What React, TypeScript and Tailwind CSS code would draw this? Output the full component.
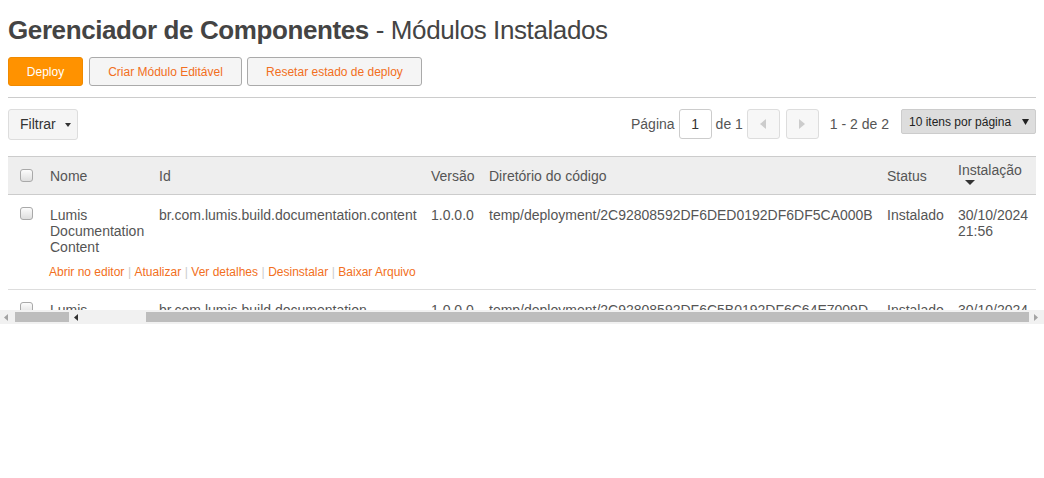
const rows = [
  {
    nome: ['Lumis', 'Documentation', 'Content'],
    id: 'br.com.lumis.build.documentation.content',
    versao: '1.0.0.0',
    dir: 'temp/deployment/2C92808592DF6DED0192DF6DF5CA000B',
    status: 'Instalado',
    data: ['30/10/2024', '21:56'],
  },
  {
    nome: ['Lumis', 'Documentation', 'Site'],
    id: 'br.com.lumis.build.documentation',
    versao: '1.0.0.0',
    dir: 'temp/deployment/2C92808592DF6C5B0192DF6C64E7009D',
    status: 'Instalado',
    data: ['30/10/2024', '21:55'],
  },
]

const acoes = ['Abrir no editor', 'Atualizar', 'Ver detalhes', 'Desinstalar', 'Baixar Arquivo']

function Checkbox() {
  return (
    <span className="block w-[13px] h-[13px] rounded-[3px] border border-[#a9a9a9] bg-gradient-to-b from-[#fcfcfc] to-[#dedede]" />
  )
}

export default function App() {
  return (
    <div className="w-[1044px] h-[478px] bg-white font-['Liberation_Sans',Arial,sans-serif] text-[#555]">
      <div className="px-2 pt-[13px]">
        {/* Title */}
        <h1 className="text-[26px] leading-[34px] text-[#444] tracking-[-0.4px]">
          <span className="font-bold">Gerenciador de Componentes</span> - Módulos Instalados
        </h1>

        {/* Actions */}
        <div className="mt-[10px] flex gap-[5px] pb-[11px] border-b border-[#ccc]">
          <button className="h-[29px] w-[75px] rounded-[3px] border border-[#f08a00] bg-[#ff9200] text-white text-[12px]">
            Deploy
          </button>
          <button className="h-[29px] ml-[1px] w-[153px] rounded-[3px] border border-[#aaa] bg-[#f5f5f5] text-[#f26f21] text-[12px]">
            Criar Módulo Editável
          </button>
          <button className="h-[29px] w-[175px] rounded-[3px] border border-[#aaa] bg-[#f5f5f5] text-[#f26f21] text-[12px]">
            Resetar estado de deploy
          </button>
        </div>

        {/* Toolbar */}
        <div className="mt-[11px] flex items-start justify-between">
          <button className="h-[31px] w-[70px] flex items-center pl-[11px] gap-[9px] rounded-[3px] border border-[#ddd] bg-[#f5f5f5] text-[14px] text-[#333]">
            Filtrar
            <svg width="6" height="4" viewBox="0 0 6 4"><path d="M0 0 L6 0 L3 4 Z" fill="#333" /></svg>
          </button>
          <div className="flex items-center text-[14px] text-[#555]">
            <span className="mr-[4px]">Página</span>
            <span className="w-[33px] h-[30px] flex items-center justify-center rounded-[3px] border border-[#ccc] text-[#333]">1</span>
            <span className="ml-[4px] mr-[4px]">de 1</span>
            <span className="w-[33px] h-[30px] flex items-center justify-center rounded-[3px] border border-[#ddd] bg-[#f7f7f7]">
              <svg width="6" height="10" viewBox="0 0 6 10"><path d="M6 0 L0 5 L6 10 Z" fill="#ccc" /></svg>
            </span>
            <span className="ml-[6px] w-[33px] h-[30px] flex items-center justify-center rounded-[3px] border border-[#ddd] bg-[#f7f7f7]">
              <svg width="6" height="10" viewBox="0 0 6 10"><path d="M0 0 L6 5 L0 10 Z" fill="#ccc" /></svg>
            </span>
            <span className="ml-[11px] mr-[12px]">1 - 2 de 2</span>
            <span className="w-[135px] h-[25px] self-start flex items-center justify-between pl-[7px] pr-[6px] rounded-[2px] border border-[#ccc] bg-[#ddd] text-[12px] text-[#222]">
              10 itens por página
              <svg width="7" height="6" viewBox="0 0 7 6"><path d="M0 0 L7 0 L3.5 6 Z" fill="#222" /></svg>
            </span>
          </div>
        </div>

        {/* Table */}
        <div className="mt-[16px] h-[154px] overflow-hidden">
          <table className="w-[1028px] table-fixed border-collapse text-[14px] leading-[16px]">
            <colgroup>
              <col className="w-[33px]" />
              <col className="w-[109px]" />
              <col className="w-[272px]" />
              <col className="w-[58px]" />
              <col className="w-[398px]" />
              <col className="w-[71px]" />
              <col className="w-[87px]" />
            </colgroup>
            <thead>
              <tr className="h-[38px] bg-[#eee] border-t border-b border-[#ccc] text-left text-[#555]">
                <th className="pl-[12px] font-normal"><Checkbox /></th>
                <th className="pl-[9px] font-normal">Nome</th>
                <th className="pl-[9px] font-normal">Id</th>
                <th className="pl-[9px] font-normal">Versão</th>
                <th className="pl-[9px] font-normal">Diretório do código</th>
                <th className="pl-[9px] font-normal">Status</th>
                <th className="pl-[9px] font-normal">
                  <div className="flex flex-col items-start -mt-[4px]">
                    <span>Instalação</span>
                    <svg className="ml-[7px] mt-[2px]" width="10" height="5" viewBox="0 0 10 5"><path d="M0 0 L10 0 L5 5 Z" fill="#333" /></svg>
                  </div>
                </th>
              </tr>
            </thead>
            <tbody>
              {rows.map((r, i) => (
                <tr key={i} className="border-b border-[#ddd] align-top">
                  <td className="pl-[12px] pt-[12px]"><Checkbox /></td>
                  <td colSpan={6} className="p-0">
                    <div className="flex pt-[12px]">
                      <div className="w-[109px] pl-[9px] shrink-0">
                        {r.nome.map((n) => <div key={n}>{n}</div>)}
                      </div>
                      <div className="w-[272px] pl-[9px] shrink-0 whitespace-nowrap">{r.id}</div>
                      <div className="w-[58px] pl-[9px] shrink-0">{r.versao}</div>
                      <div className="w-[398px] pl-[9px] shrink-0">{r.dir}</div>
                      <div className="w-[71px] pl-[9px] shrink-0">{r.status}</div>
                      <div className="w-[87px] pl-[9px] shrink-0">
                        {r.data.map((d) => <div key={d}>{d}</div>)}
                      </div>
                    </div>
                    <div className="pl-[8px] mt-[9px] pb-[9px] text-[12px] text-[#f26f21] whitespace-nowrap">
                      {acoes.map((a, j) => (
                        <span key={a}>
                          {j > 0 && <span className="text-[#ccc] mx-[3.5px]">|</span>}
                          {a}
                        </span>
                      ))}
                    </div>
                  </td>
                </tr>
              ))}
            </tbody>
          </table>
        </div>
      </div>

      {/* Scrollbar */}
      <div className="w-[1044px] h-[14px] bg-[#f1f1f1] flex items-center">
        <svg className="ml-[4px]" width="4" height="7" viewBox="0 0 4 7"><path d="M4 0 L0 3.5 L4 7 Z" fill="#a3a3a3" /></svg>
        <span className="ml-[7px] w-[54px] h-[10px] bg-[#bdbdbd]" />
        <svg className="ml-[5px]" width="4" height="7" viewBox="0 0 4 7"><path d="M4 0 L0 3.5 L4 7 Z" fill="#333" /></svg>
        <span className="ml-[68px] w-[883px] h-[10px] bg-[#bdbdbd]" />
        <svg className="ml-[5px]" width="4" height="7" viewBox="0 0 4 7"><path d="M0 0 L4 3.5 L0 7 Z" fill="#a3a3a3" /></svg>
      </div>
    </div>
  )
}
